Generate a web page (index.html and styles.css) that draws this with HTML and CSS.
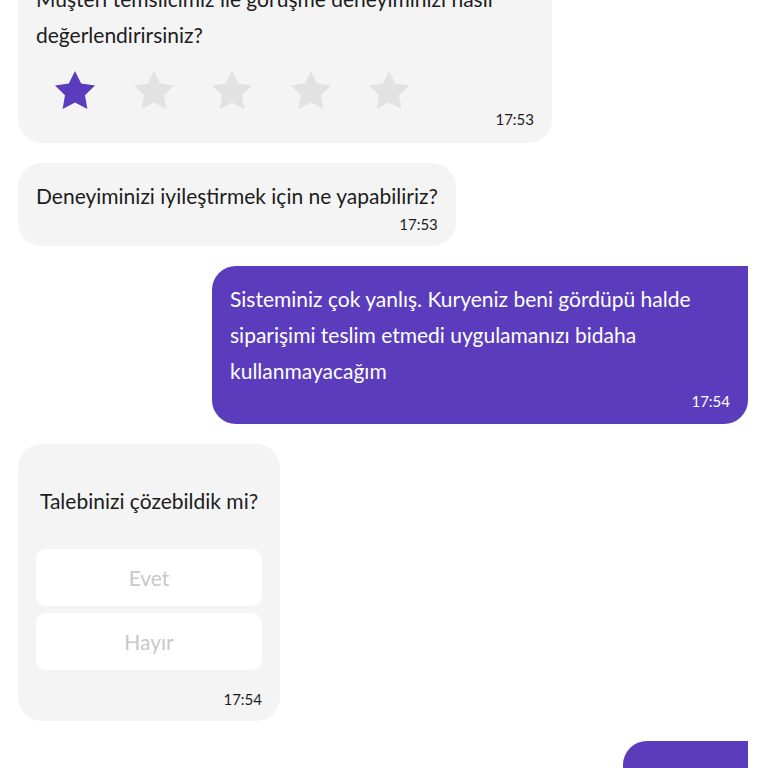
FILE: index.html
```html
<!DOCTYPE html>
<html lang="tr">
  <head>
    <meta charset="UTF-8" />
    <meta name="viewport" content="width=device-width, initial-scale=1.0" />
    <title>Canlı Destek</title>
    <link rel="stylesheet" href="styles.css">
  </head>
  <body>
    <div class="chat">
      <div class="bubble incoming rating">
        <p class="text">Müşteri temsilcimiz ile görüşme deneyiminizi nasıl değerlendirirsiniz?</p>
        <div class="stars">
          <svg class="star active" viewBox="0 0 24 24"><path d="M12 2l3.09 6.26L22 9.27l-5 4.87 1.18 6.88L12 17.77l-6.18 3.25L7 14.14 2 9.27l6.91-1.01L12 2z" /></svg>
          <svg class="star" viewBox="0 0 24 24"><path d="M12 2l3.09 6.26L22 9.27l-5 4.87 1.18 6.88L12 17.77l-6.18 3.25L7 14.14 2 9.27l6.91-1.01L12 2z" /></svg>
          <svg class="star" viewBox="0 0 24 24"><path d="M12 2l3.09 6.26L22 9.27l-5 4.87 1.18 6.88L12 17.77l-6.18 3.25L7 14.14 2 9.27l6.91-1.01L12 2z" /></svg>
          <svg class="star" viewBox="0 0 24 24"><path d="M12 2l3.09 6.26L22 9.27l-5 4.87 1.18 6.88L12 17.77l-6.18 3.25L7 14.14 2 9.27l6.91-1.01L12 2z" /></svg>
          <svg class="star" viewBox="0 0 24 24"><path d="M12 2l3.09 6.26L22 9.27l-5 4.87 1.18 6.88L12 17.77l-6.18 3.25L7 14.14 2 9.27l6.91-1.01L12 2z" /></svg>
        </div>
        <div class="time">17:53</div>
      </div>

      <div class="bubble incoming">
        <p class="text">Deneyiminizi iyileştirmek için ne yapabiliriz?</p>
        <div class="time">17:53</div>
      </div>

      <div class="bubble outgoing complaint">
        <p class="text">Sisteminiz çok yanlış. Kuryeniz beni gördüpü halde siparişimi teslim etmedi uygulamanızı bidaha kullanmayacağım</p>
        <div class="time">17:54</div>
      </div>

      <div class="bubble incoming survey">
        <p class="text question">Talebinizi çözebildik mi?</p>
        <div class="options">
          <button type="button" class="option">Evet</button>
          <button type="button" class="option">Hayır</button>
        </div>
        <div class="time">17:54</div>
      </div>

      <div class="bubble outgoing answer">
        <p class="text">Hayır</p>
        <div class="time">17:54</div>
      </div>
    </div>
  </body>
</html>
```

FILE: styles.css
```css
body {
  margin: 0;
  background-color: #fff;
  font-family: Lato, "Noto Sans", Arial, sans-serif;
  color: #1c1c1c;
  overflow: hidden;
}
.chat {
  display: flex;
  flex-direction: column;
  gap: 20px;
  margin-top: -34px;
  padding: 0 20px 0 18px;
}
.bubble {
  box-sizing: border-box;
  padding: 15px 18px 12px;
  border-radius: 24px;
  max-width: 536px;
}
.incoming {
  align-self: flex-start;
  background-color: #f4f4f4;
}
.outgoing {
  align-self: flex-end;
  background-color: #5a3cbd;
  color: #fff;
  border-top-right-radius: 0;
}
.text {
  margin: 0;
  font-size: 21px;
  line-height: 36px;
}
.time {
  text-align: right;
  font-size: 15px;
  line-height: 20px;
}
.rating {
  width: 534px;
  padding-bottom: 14px;
}
.stars {
  display: flex;
  gap: 30.5px;
  margin: 14px 0 0 15px;
}
.star {
  width: 48px;
  height: 48px;
  fill: #e2e2e2;
}
.star.active {
  fill: #5a3cbd;
}
.rating .time {
  margin-top: -6px;
}
.complaint {
  width: 536px;
  padding-bottom: 13px;
}
.complaint .time {
  margin-top: 2px;
}
.survey {
  width: 262px;
  padding-top: 39px;
  padding-bottom: 12px;
}
.question {
  text-align: center;
}
.options {
  display: flex;
  flex-direction: column;
  gap: 7px;
  margin: 30px 0 19px;
}
.option {
  height: 57px;
  border: none;
  border-radius: 10px;
  background-color: #fff;
  color: #c8c8c8;
  font-family: inherit;
  font-size: 21px;
}
.answer {
  min-width: 125px;
  padding-top: 28px;
}
```
